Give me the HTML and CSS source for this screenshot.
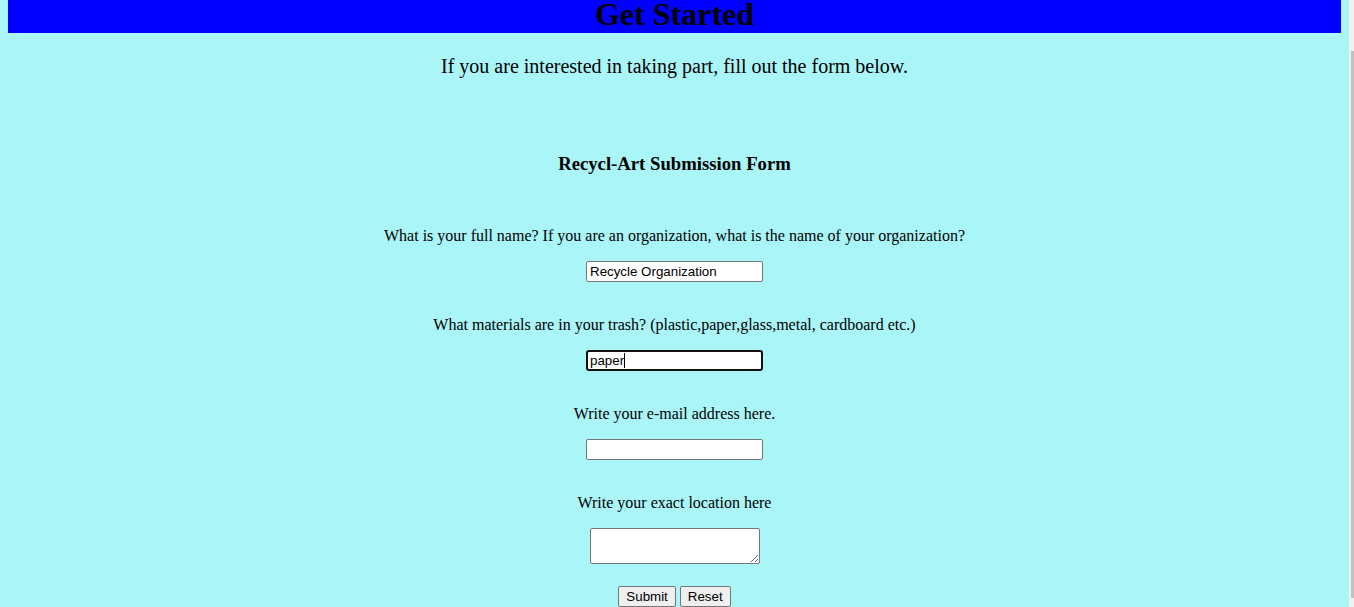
FILE: index.html
```html
<!DOCTYPE html>
<html lang="en">
<head>
<meta charset="utf-8">
<title>Get Started</title>
<link rel="stylesheet" href="styles.css">
</head>
<body>
<h1 class="banner">Get Started</h1>
<p class="intro">If you are interested in taking part, fill out the form below.</p>
<h3 class="form-title">Recycl-Art Submission Form</h3>
<form class="form">
  <label class="label" for="name">What is your full name? If you are an organization, what is the name of your organization?</label>
  <input class="field" id="name" type="text" value="Recycle Organization">
  <label class="label" for="materials">What materials are in your trash? (plastic,paper,glass,metal, cardboard etc.)</label>
  <span class="field-wrap"><input class="field field-focused" id="materials" type="text" value="paper"><span class="caret"></span></span>
  <label class="label" for="email">Write your e-mail address here.</label>
  <input class="field" id="email" type="email">
  <label class="label" for="location">Write your exact location here</label>
  <textarea class="area" id="location"></textarea>
  <div class="buttons">
    <button class="btn" type="submit">Submit</button>
    <button class="btn" type="reset">Reset</button>
  </div>
</form>
<div class="scrollbar"><div class="thumb"></div></div>
</body>
</html>
```
FILE: styles.css
```css
html {
  overflow: hidden;
  padding-right: 5px;
  background: #aaf5f8;
}
body {
  margin: 0 8px;
  background: #aaf5f8;
  font-family: "Liberation Serif", "Times New Roman", serif;
  color: #000;
}
.banner {
  margin: 0;
  padding-bottom: 4px;
  background: #0000ff;
  font-size: 32px;
  line-height: 29px;
  text-align: center;
  font-weight: bold;
}
.intro {
  margin: 22px 0 0;
  font-size: 20px;
  line-height: 23px;
  text-align: center;
}
.form-title {
  margin: 75px 0 0;
  font-size: 18.72px;
  line-height: 22px;
  text-align: center;
}
.form {
  margin-top: 52px;
  display: flex;
  flex-direction: column;
  align-items: center;
}
.label {
  font-size: 16px;
  line-height: 18px;
  margin-bottom: 16px;
}
.field, .field-wrap {
  margin-bottom: 34px;
}
.field-wrap .field {
  margin-bottom: 0;
}
.field {
  display: block;
  box-sizing: border-box;
  width: 177px;
  height: 21px;
  padding: 1px 3px;
  border: 1px solid #767676;
  border-radius: 2px;
  background: #fff;
  font-family: "Liberation Sans", Arial, sans-serif;
  font-size: 13.33px;
  color: #000;
}
.field-wrap {
  position: relative;
  display: block;
}
.field-focused {
  border: 2px solid #101010;
  border-radius: 3px;
  padding: 0 2px;
  outline: none;
}
.caret {
  position: absolute;
  left: 38px;
  top: 3px;
  width: 1px;
  height: 15px;
  background: #000;
}
.area {
  display: block;
  box-sizing: border-box;
  width: 170px;
  height: 36px;
  margin: 0 0 22px;
  border: 1px solid #767676;
  border-radius: 2px;
  background: #fff;
  resize: both;
}
.buttons {
  display: flex;
  gap: 4px;
}
.btn {
  box-sizing: border-box;
  height: 21px;
  padding: 1px 7px;
  border: 1px solid #767676;
  border-radius: 2px;
  background: #efefef;
  font-family: "Liberation Sans", Arial, sans-serif;
  font-size: 13.33px;
  color: #000;
}
.scrollbar {
  position: fixed;
  top: 0;
  right: 0;
  width: 5px;
  height: 100%;
  background: #f1f1f1;
}
.thumb {
  position: absolute;
  top: 51px;
  left: 2px;
  right: 0;
  height: 547px;
  background: #c1c1c1;
}
```
